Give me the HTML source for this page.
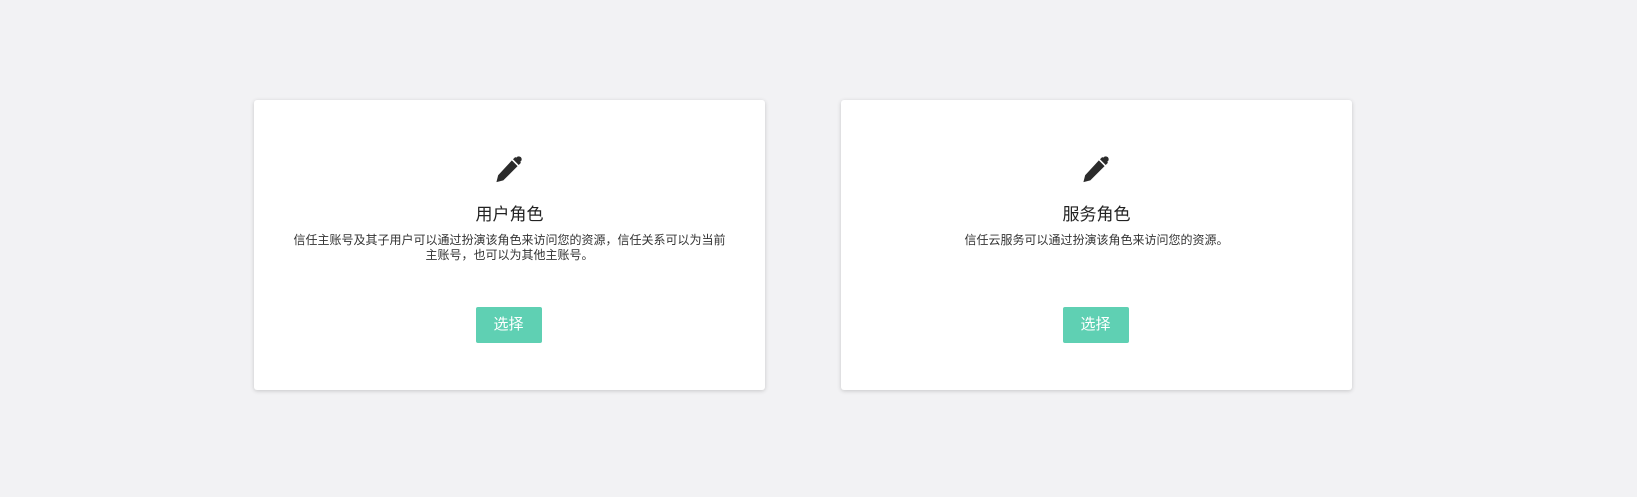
<!DOCTYPE html>
<html><head><meta charset="utf-8"><style>
html,body{margin:0;padding:0;width:1637px;height:497px;background:#f2f2f4;overflow:hidden;font-family:"Liberation Sans","Noto Sans CJK SC",sans-serif;}
.card{position:absolute;top:100px;width:511px;height:290px;background:#fff;border-radius:3px;box-shadow:0 1px 4px rgba(0,0,0,.18);text-align:center;}
.icon{position:absolute;left:50%;margin-left:-17px;top:53px;}
.title{position:absolute;left:0;right:0;top:104px;font-size:17px;color:#222;line-height:22px;}
.desc{position:absolute;left:36px;right:36px;top:133px;font-size:12px;color:#333;line-height:15px;}
.btn{position:absolute;left:50%;margin-left:-34px;top:207px;width:66px;height:36px;background:#5fd0b3;color:#fff;border-radius:2px;font-size:15px;line-height:36px;}
</style></head><body>
<div class="card" style="left:254px">
<svg class="icon" width="32" height="32" viewBox="0 0 28 28"><path d="M19.5 3.5l5 5-2 2-5-5z M16.5 6.5l5 5L9 24l-6 1.5 1.5-6z" fill="#2b2b2b"/><circle cx="22.5" cy="5.5" r="2.6" fill="#2b2b2b"/></svg>
<div class="title">用户角色</div>
<div class="desc">信任主账号及其子用户可以通过扮演该角色来访问您的资源，信任关系可以为当前主账号，也可以为其他主账号。</div>
<div class="btn">选择</div>
</div>
<div class="card" style="left:841px">
<svg class="icon" width="32" height="32" viewBox="0 0 28 28"><path d="M19.5 3.5l5 5-2 2-5-5z M16.5 6.5l5 5L9 24l-6 1.5 1.5-6z" fill="#2b2b2b"/><circle cx="22.5" cy="5.5" r="2.6" fill="#2b2b2b"/></svg>
<div class="title">服务角色</div>
<div class="desc">信任云服务可以通过扮演该角色来访问您的资源。</div>
<div class="btn">选择</div>
</div>
</body></html>
